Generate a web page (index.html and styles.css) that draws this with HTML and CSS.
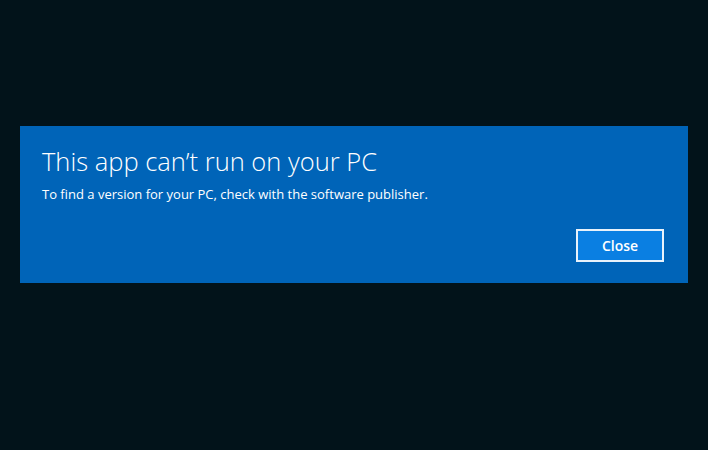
FILE: index.html
```html
<!DOCTYPE html>
<html>
<head>
<meta charset="utf-8">
<link rel="stylesheet" href="styles.css">
</head>
<body>
<div class="screen">
  <div class="dialog">
    <h1 class="title">This app can’t run on your PC</h1>
    <p class="message">To find a version for your PC, check with the software publisher.</p>
    <div class="actions">
      <button class="close-btn">Close</button>
    </div>
  </div>
</div>
</body>
</html>
```
FILE: styles.css
```css
html, body {
  margin: 0;
  padding: 0;
  width: 708px;
  height: 450px;
  background: #02131a;
  overflow: hidden;
}
.screen {
  padding: 126px 20px 0 20px;
}
.dialog {
  background: #0064b8;
  height: 157px;
  box-sizing: border-box;
  padding: 0 24px 0 22px;
  display: flex;
  flex-direction: column;
  font-family: "Open Sans", "Noto Sans", sans-serif;
  color: #ffffff;
}
.title {
  margin: 18px 0 0 0;
  font-weight: 300;
  font-size: 25.5px;
  line-height: 34px;
  letter-spacing: 0;
}
.message {
  margin: 7px 0 0 0;
  font-size: 13px;
  line-height: 18px;
  font-weight: 400;
}
.actions {
  display: flex;
  justify-content: flex-end;
  margin-top: 26px;
}
.close-btn {
  width: 88px;
  height: 33px;
  background: #0a7fe2;
  border: 2px solid #e8f2fb;
  color: #ffffff;
  font-family: "Open Sans", "Noto Sans", sans-serif;
  font-weight: 600;
  font-size: 14px;
  padding: 0;
}
```
